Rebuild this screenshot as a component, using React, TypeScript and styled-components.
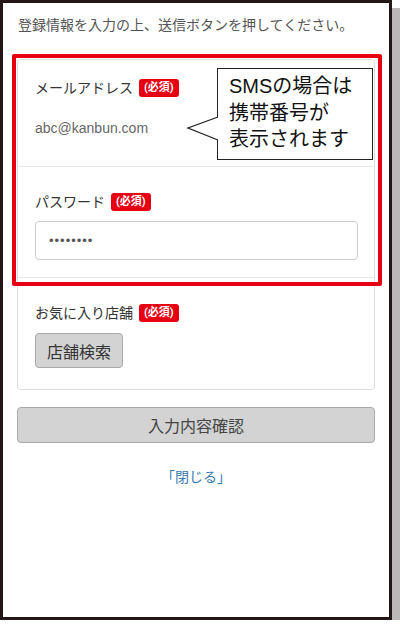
import styled, {createGlobalStyle} from 'styled-components'

const GlobalStyle = createGlobalStyle`
  html, body {
    margin: 0;
    padding: 0;
    background: #ffffff;
  }
  body {
    font-family: Roboto, "Noto Sans CJK JP", sans-serif;
    color: #333333;
  }
`

type FieldProps = {
  label: string
  required?: boolean
}

const FieldLabel = ({label, required}: FieldProps) => (
  <LabelRow>
    <LabelText>{label}</LabelText>
    {required ? <Badge>(必須)</Badge> : null}
  </LabelRow>
)

const App = () => {
  return (
    <>
      <GlobalStyle />
      <Frame>
        <Lead>登録情報を入力の上、送信ボタンを押してください。</Lead>

        <Card>
          <Section $top={18} $bottom={28}>
            <FieldLabel label="メールアドレス" required />
            <Value>abc@kanbun.com</Value>
          </Section>

          <Section $top={25} $bottom={17}>
            <FieldLabel label="パスワード" required />
            <FakeInput>
              <Dots>••••••••</Dots>
            </FakeInput>
          </Section>

          <Section $top={25} $bottom={21} $last>
            <FieldLabel label="お気に入り店舗" required />
            <SmallButton type="button">店舗検索</SmallButton>
          </Section>

          {/* annotation overlay from the original screenshot */}
          <Highlight />
          <Callout>
            <Tail width="32" height="26" viewBox="0 0 32 26">
              <polyline points="31,1 1,12 31,24" fill="#ffffff" stroke="#222222" strokeWidth="1.3" />
              <rect x="30.5" y="2.2" width="2" height="20.6" fill="#ffffff" />
            </Tail>
            SMSの場合は
            <br />
            携帯番号が
            <br />
            表示されます
          </Callout>
        </Card>

        <ConfirmButton type="button">入力内容確認</ConfirmButton>
        <CloseLink href="#">「閉じる」</CloseLink>
      </Frame>
    </>
  )
}

const Frame = styled.div`
  box-sizing: border-box;
  width: 392px;
  height: 620px;
  border: 3px solid #231815;
  background: #ffffff;
  box-shadow: 8px 8px 0 #bcb8b7;
  padding: 12px 14px 0;
  display: flex;
  flex-direction: column;
`

const Lead = styled.p`
  margin: 0 0 24px 1px;
  font-size: 14px;
  line-height: 20px;
  color: #555555;
  white-space: nowrap;
`

const Card = styled.div`
  position: relative;
  border: 1px solid #dddddd;
  border-radius: 4px;
  background: #ffffff;
`

const Section = styled.div<{$top: number; $bottom: number; $last?: boolean}>`
  padding: ${({$top, $bottom}) => `${$top}px 16px ${$bottom}px 17px`};
  border-bottom: ${({$last}) => ($last ? 'none' : '1px solid #e6e6e6')};
  display: flex;
  flex-direction: column;
  align-items: flex-start;
`

const LabelRow = styled.div`
  display: flex;
  align-items: center;
  gap: 6px;
  height: 20px;
`

const LabelText = styled.span`
  font-size: 14px;
  line-height: 20px;
  color: #333333;
`

const Badge = styled.span`
  display: inline-block;
  height: 18px;
  line-height: 18px;
  padding: 0 5px;
  border-radius: 3px;
  background: #e60012;
  color: #ffffff;
  font-size: 11px;
  font-weight: 700;
`

const Value = styled.div`
  margin-top: 20px;
  font-family: "Liberation Sans", "Noto Sans CJK JP", sans-serif;
  font-size: 14px;
  line-height: 20px;
  color: #666666;
`

const FakeInput = styled.div`
  box-sizing: border-box;
  margin-top: 9px;
  width: 100%;
  height: 39px;
  border: 1px solid #cccccc;
  border-radius: 4px;
  padding: 0 13px;
  display: flex;
  align-items: center;
`

const Dots = styled.span`
  font-family: "Liberation Sans", sans-serif;
  font-size: 13px;
  letter-spacing: 1px;
  color: #555555;
`

const SmallButton = styled.button`
  margin-top: 10px;
  width: 88px;
  height: 35px;
  border: 1px solid #a9a9a9;
  border-radius: 4px;
  background: #d3d3d3;
  color: #333333;
  font-family: "Noto Sans CJK JP", sans-serif;
  font-size: 16px;
  padding: 0;
`

const ConfirmButton = styled.button`
  margin-top: 17px;
  width: 100%;
  height: 36px;
  border: 1px solid #a9a9a9;
  border-radius: 4px;
  background: #d3d3d3;
  color: #444444;
  font-family: "Noto Sans CJK JP", sans-serif;
  font-size: 16px;
  padding: 0;
`

const CloseLink = styled.a`
  margin-top: 24px;
  align-self: center;
  font-size: 14px;
  line-height: 20px;
  color: #3a7bb5;
  text-decoration: none;
`

const Highlight = styled.div`
  position: absolute;
  top: -6px;
  left: -6px;
  right: -8px;
  height: 232px;
  box-sizing: border-box;
  border: 4px solid #e60012;
  border-radius: 2px;
  pointer-events: none;
`

const Callout = styled.div`
  position: absolute;
  top: 8px;
  left: 199px;
  width: 156px;
  height: 92px;
  box-sizing: border-box;
  border: 1.3px solid #222222;
  background: #ffffff;
  padding: 4px 0 0 11px;
  font-family: "Liberation Sans", "Noto Sans CJK JP", sans-serif;
  font-size: 20px;
  line-height: 26.5px;
  color: #111111;
  white-space: nowrap;
`

const Tail = styled.svg`
  position: absolute;
  left: -31px;
  top: 47px;
  overflow: visible;
`

export default App
